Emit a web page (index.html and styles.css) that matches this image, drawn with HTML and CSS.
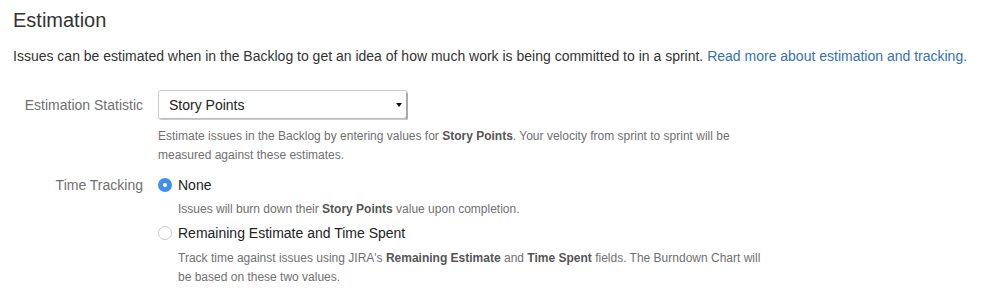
FILE: index.html
```html
<!DOCTYPE html>
<html>
<head>
<meta charset="utf-8">
<link rel="stylesheet" href="styles.css">
</head>
<body>
<div class="page">
  <h2 class="title">Estimation</h2>
  <p class="intro">Issues can be estimated when in the Backlog to get an idea of how much work is being committed to in a sprint. <a class="link" href="#">Read more about estimation and tracking.</a></p>

  <div class="row row-stat">
    <div class="label label-select">Estimation Statistic</div>
    <div class="field">
      <div class="select">
        <span class="select-value">Story Points</span>
        <span class="select-arrow"></span>
      </div>
      <div class="desc desc-stat">Estimate issues in the Backlog by entering values for <b>Story Points</b>. Your velocity from sprint to sprint will be measured against these estimates.</div>
    </div>
  </div>

  <div class="row row-time">
    <div class="label">Time Tracking</div>
    <div class="field">
      <div class="radio-line">
        <span class="radio checked"></span>
        <span class="radio-text">None</span>
      </div>
      <div class="desc desc-radio desc-none">Issues will burn down their <b>Story Points</b> value upon completion.</div>
      <div class="radio-line radio-line-2">
        <span class="radio"></span>
        <span class="radio-text">Remaining Estimate and Time Spent</span>
      </div>
      <div class="desc desc-radio desc-remaining">Track time against issues using JIRA's <b>Remaining Estimate</b> and <b>Time Spent</b> fields. The Burndown Chart will be based on these two values.</div>
    </div>
  </div>
</div>
</body>
</html>
```

FILE: styles.css
```css
html, body {
  margin: 0;
  padding: 0;
  background: #ffffff;
}

body {
  font-family: "Liberation Sans", Arial, sans-serif;
  color: #333333;
}

.page {
  padding: 0 13px;
}

.title {
  margin: 8px 0 0 0;
  font-size: 20px;
  line-height: 24px;
  font-weight: normal;
  color: #333333;
}

.intro {
  margin: 14px 0 0 0;
  font-size: 14px;
  line-height: 20px;
  color: #333333;
}

.link {
  color: #3572b0;
  text-decoration: none;
}

.row {
  display: flex;
  align-items: flex-start;
}

.row-stat {
  margin-top: 24px;
}

.row-time {
  margin-top: 10px;
}

.label {
  width: 130px;
  flex: none;
  text-align: right;
  font-size: 14px;
  line-height: 20px;
  color: #707070;
  padding-right: 15px;
}

.label-select {
  line-height: 30px;
}

.field {
  display: flex;
  flex-direction: column;
  align-items: flex-start;
}

.select {
  box-sizing: border-box;
  width: 250px;
  height: 30px;
  border: 1px solid #cccccc;
  border-radius: 3px;
  background: #ffffff;
  position: relative;
  display: flex;
  align-items: center;
  box-shadow: inset -2px -2px 0 -1px #bdbdbd;
}

.select::after {
  content: "";
  position: absolute;
  right: -1px;
  top: 2px;
  bottom: -1px;
  width: 2px;
  background: #a9a9a9;
  border-radius: 0 2px 2px 0;
}

.select-value {
  padding-left: 10px;
  font-size: 14px;
  color: #222222;
}

.select-arrow {
  position: absolute;
  right: 5px;
  top: 12px;
  width: 0;
  height: 0;
  border-left: 3.5px solid transparent;
  border-right: 3.5px solid transparent;
  border-top: 4px solid #111111;
}

.desc {
  font-size: 12px;
  line-height: 19px;
  color: #707070;
  max-width: 610px;
}

.desc b {
  color: #555555;
}

.desc-stat {
  margin-top: 7px;
}

.desc-radio {
  margin-left: 20px;
  margin-top: 5px;
  max-width: 590px;
}

.desc-remaining {
  margin-top: 6px;
}

.radio-line {
  display: flex;
  align-items: center;
  height: 20px;
}

.radio-line-2 {
  margin-top: 4px;
}

.radio {
  box-sizing: border-box;
  width: 14px;
  height: 14px;
  border-radius: 50%;
  border: 1px solid #c8c8c8;
  background: #ffffff;
  flex: none;
  position: relative;
}

.radio.checked {
  border: none;
  background: #3d8ff3;
}

.radio.checked::after {
  content: "";
  position: absolute;
  left: 5px;
  top: 5px;
  width: 4px;
  height: 4px;
  border-radius: 50%;
  background: #ffffff;
}

.radio-text {
  margin-left: 6px;
  font-size: 14px;
  color: #222222;
}
```
